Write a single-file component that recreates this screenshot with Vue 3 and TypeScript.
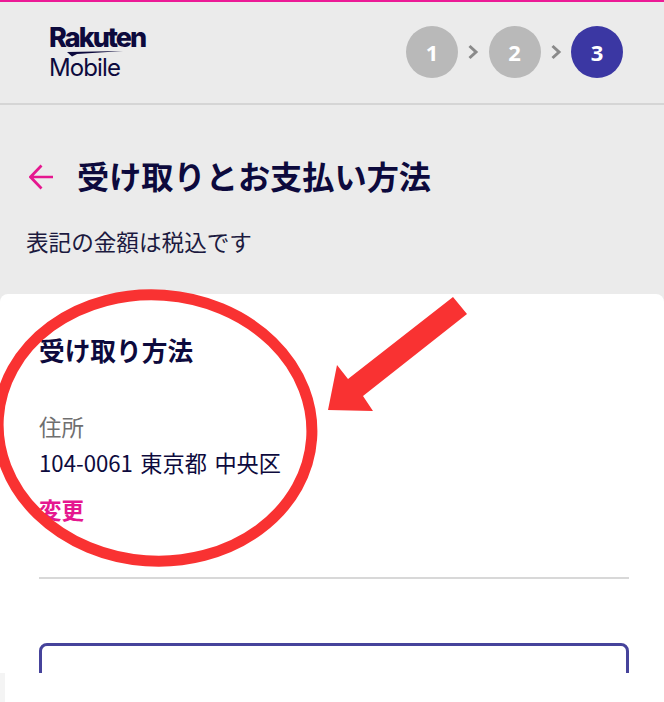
<script setup lang="ts">
const steps = [
  { n: 1, active: false },
  { n: 2, active: false },
  { n: 3, active: true },
]
</script>

<template>
  <div class="page">
    <header class="header">
      <div class="logo">
        <div class="logo-top">Rakuten</div>
        <svg class="swoosh" viewBox="0 0 56 6" width="56" height="6"><path d="M0 1 L56 0 L10 3 L5 5.5 Z" fill="#0d0a3d" /></svg>
        <div class="logo-bottom">Mobile</div>
      </div>
      <div class="steps">
        <template v-for="(s, i) in steps" :key="s.n">
          <svg v-if="i > 0" class="chev" viewBox="0 0 12 16" width="12" height="16"><path d="M2.5 2 L9 8 L2.5 14" fill="none" stroke="#8a8a8a" stroke-width="3" /></svg>
          <div class="step" :class="{ active: s.active }">{{ s.n }}</div>
        </template>
      </div>
    </header>

    <section class="intro">
      <div class="title-row">
        <svg class="back" viewBox="0 0 24 26" width="24" height="26"><path d="M24 13 H1.5 M12.5 1.5 L1.5 13 L12.5 24.5" fill="none" stroke="#e5178f" stroke-width="2.7" /></svg>
        <h1 class="title">受け取りとお支払い方法</h1>
      </div>
      <p class="note">表記の金額は税込です</p>
    </section>

    <main class="card">
      <h2 class="card-title">受け取り方法</h2>
      <div class="label">住所</div>
      <div class="address">104-0061 東京都 中央区</div>
      <a class="change">変更</a>
      <hr class="divider" />
      <div class="option"></div>
    </main>

    <div class="cover"><span class="strip"></span></div>

    <svg class="markup" viewBox="0 0 664 702" width="664" height="702">
      <ellipse cx="155" cy="428" rx="157" ry="133" fill="none" stroke="#f93232" stroke-width="11" transform="rotate(4 155 428)" />
      <path d="M453 297 L467 314 L363 396 L373 411 L328 410 L337 365 L348 379 Z" fill="#f93232" />
    </svg>
  </div>
</template>

<style>
html, body { margin: 0; background: #fff; }
</style>

<style scoped>
.page {
  position: relative;
  width: 664px;
  height: 702px;
  overflow: hidden;
  background: #ebebeb;
  font-family: "Noto Sans CJK JP", "Noto Sans", sans-serif;
  color: #0d0a3d;
}
.header {
  box-sizing: border-box;
  height: 105px;
  border-top: 2px solid #ec1a96;
  border-bottom: 2px solid #d5d5d5;
  display: flex;
  align-items: flex-start;
  justify-content: space-between;
  padding: 24px 41px 0 49px;
}
.logo { display: flex; flex-direction: column; align-items: flex-start; width: 100px; }
.logo-top {
  font-family: "Inter", sans-serif;
  font-size: 27px;
  font-weight: 800;
  line-height: 24px;
  letter-spacing: -2px;
}
.swoosh { margin: 1px 0 0 18px; display: block; }
.logo-bottom {
  font-family: "Inter", sans-serif;
  font-size: 24px;
  font-weight: 400;
  line-height: 26px;
  letter-spacing: -0.9px;
  margin-top: -2px;
}
.steps { display: flex; align-items: center; gap: 9.25px; }
.step {
  width: 52px;
  height: 52px;
  border-radius: 50%;
  background: #b9b9b9;
  color: #fff;
  font-family: "Open Sans", sans-serif;
  font-size: 22px;
  font-weight: 700;
  display: flex;
  align-items: center;
  justify-content: center;
}
.step.active { background: #3b37a3; }
.chev { display: block; }
.intro { padding: 0 26px; height: 189px; box-sizing: border-box; overflow: hidden; }
.title-row { display: flex; align-items: center; gap: 24px; margin-top: 46px; padding-left: 3px; }
.back { display: block; flex: none; margin-top: 3px; }
.title { margin: 0; font-size: 32.2px; line-height: 48px; font-weight: 700; white-space: nowrap; }
.note { margin: 26px 0 0; font-size: 22.6px; line-height: 34px; font-weight: 400; color: #1c1a40; }
.card {
  background: #fff;
  border-radius: 8px 8px 0 0;
  padding: 37px 35px 0 39px;
  height: 420px;
  box-sizing: border-box;
}
.card-title { margin: 0; font-size: 25.7px; line-height: 38px; font-weight: 700; }
.label { margin-top: 40px; font-size: 22.4px; line-height: 34px; color: #6f6f6f; }
.address { margin-top: 3px; font-size: 22.2px; line-height: 33px; word-spacing: 2.5px; color: #0d0a3d; }
.change { display: block; margin-top: 13px; font-size: 22.5px; line-height: 34px; font-weight: 700; color: #e5178f; }
.divider { margin: 51px 0 0; border: 0; border-top: 2px solid #d8d8d8; }
.option {
  margin-top: 64px;
  height: 60px;
  border: 3px solid #46439b;
  border-radius: 8px 8px 0 0;
  box-sizing: border-box;
}
.cover { position: absolute; left: 0; right: 0; top: 673px; height: 29px; background: #fff; }
.strip { display: block; width: 5px; height: 29px; background: #f4f4f4; }
.markup { position: absolute; left: 0; top: 0; pointer-events: none; }
</style>
